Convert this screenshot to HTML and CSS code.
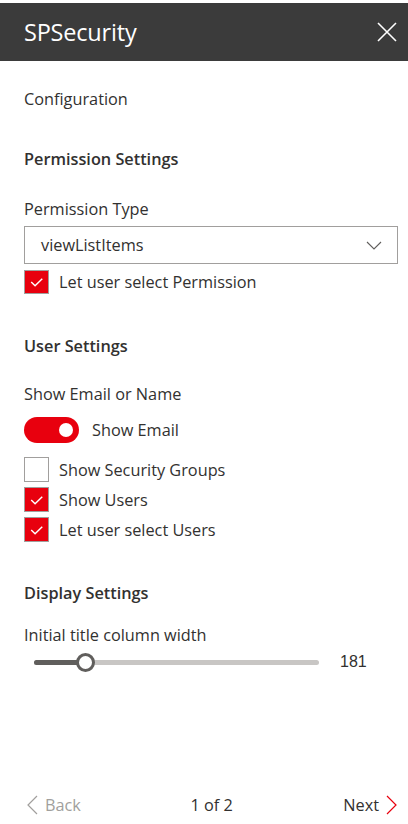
FILE: index.html
```html
<!DOCTYPE html>
<html lang="en">
<head>
<meta charset="utf-8">
<title>SPSecurity</title>
<link rel="stylesheet" href="styles.css">
</head>
<body>
<div class="panel">
  <header class="header">
    <div class="title">SPSecurity</div>
    <button class="close" aria-label="Close">
      <svg width="20" height="20" viewBox="0 0 20 20"><path d="M1 1 L19 19 M19 1 L1 19" stroke="#fff" stroke-width="1.6" fill="none"/></svg>
    </button>
  </header>
  <main class="content">
    <div class="page-title">Configuration</div>

    <div class="section-head sh-perm">Permission Settings</div>
    <div class="field-label fl-perm">Permission Type</div>
    <div class="dropdown">
      <span>viewListItems</span>
      <svg width="16" height="9" viewBox="0 0 16 9"><path d="M1 1 L8 8 L15 1" stroke="#605e5c" stroke-width="1.1" fill="none"/></svg>
    </div>
    <label class="check checked first">
      <span class="box"><svg width="24" height="24" viewBox="0 0 24 24"><polyline points="6.5,12 10.5,16 18,8.5" stroke="#fff" stroke-width="1.5" fill="none"/></svg></span>
      <span class="check-text">Let user select Permission</span>
    </label>

    <div class="section-head sh-user">User Settings</div>
    <div class="field-label fl-user">Show Email or Name</div>
    <div class="toggle-row">
      <span class="toggle"><span class="knob"></span></span>
      <span class="toggle-text">Show Email</span>
    </div>
    <div class="checks">
      <label class="check">
        <span class="box"></span>
        <span class="check-text">Show Security Groups</span>
      </label>
      <label class="check checked">
        <span class="box"><svg width="24" height="24" viewBox="0 0 24 24"><polyline points="6.5,12 10.5,16 18,8.5" stroke="#fff" stroke-width="1.5" fill="none"/></svg></span>
        <span class="check-text">Show Users</span>
      </label>
      <label class="check checked">
        <span class="box"><svg width="24" height="24" viewBox="0 0 24 24"><polyline points="6.5,12 10.5,16 18,8.5" stroke="#fff" stroke-width="1.5" fill="none"/></svg></span>
        <span class="check-text">Let user select Users</span>
      </label>
    </div>

    <div class="section-head sh-disp">Display Settings</div>
    <div class="field-label fl-disp">Initial title column width</div>
    <div class="slider-row">
      <div class="slider">
        <div class="track"></div>
        <div class="fill" style="width: 51px"></div>
        <div class="thumb" style="left: 51px"></div>
      </div>
      <span class="slider-value">181</span>
    </div>
  </main>
  <footer class="footer">
    <span class="nav back">
      <svg width="12" height="20" viewBox="0 0 12 20"><path d="M10 1 L1 10 L10 19" stroke="#a19f9d" stroke-width="1.2" fill="none"/></svg>
      Back
    </span>
    <span class="pager">1 of 2</span>
    <span class="nav next">
      Next
      <svg width="12" height="20" viewBox="0 0 12 20"><path d="M2 1 L11 10 L2 19" stroke="#e8000e" stroke-width="1.2" fill="none"/></svg>
    </span>
  </footer>
</div>
</body>
</html>
```

FILE: styles.css
```css
* { box-sizing: border-box; }

html, body {
  margin: 0;
  padding: 0;
  background: #fff;
}

body {
  font-family: "Open Sans", "Noto Sans", "Liberation Sans", sans-serif;
  color: #323130;
  font-size: 16.3px;
}

.panel {
  min-height: 824px;
  display: flex;
  flex-direction: column;
  padding-top: 3px;
}

.header {
  height: 58px;
  background: #3b3b3b;
  display: flex;
  align-items: center;
  justify-content: space-between;
  padding: 0 11px 0 24px;
}

.title {
  color: #fff;
  font-size: 23.5px;
  font-weight: 400;
  line-height: 30px;
  letter-spacing: -0.2px;
}

.close {
  background: none;
  border: 0;
  padding: 0;
  width: 20px;
  height: 20px;
  display: flex;
}

.content {
  padding: 0 10px 0 24px;
  display: flex;
  flex-direction: column;
}

.page-title {
  margin-top: 27px;
  line-height: 22px;
}

.section-head {
  font-weight: 600;
  line-height: 22px;
}

.sh-perm { margin-top: 38px; }
.sh-user { margin-top: 41px; }
.sh-disp { margin-top: 40px; }

.field-label {
  line-height: 22px;
}

.fl-perm { margin-top: 28px; }
.fl-user { margin-top: 26px; }
.fl-disp { margin-top: 20px; }

.dropdown {
  margin-top: 6px;
  height: 38px;
  border: 1px solid #a19f9d;
  display: flex;
  align-items: center;
  justify-content: space-between;
  padding: 0 15px 0 16px;
}

.check {
  display: flex;
  align-items: center;
  height: 25px;
  gap: 10px;
}

.check.first {
  margin-top: 6px;
  height: 24px;
}

.box {
  width: 25px;
  height: 25px;
  border: 1px solid #a19f9d;
  background: #fff;
  display: flex;
  align-items: center;
  justify-content: center;
  flex: none;
}

.first .box {
  height: 24px;
}

.check.checked .box {
  background: #e8000e;
}

.check-text {
  line-height: 22px;
}

.toggle-row {
  margin-top: 12px;
  display: flex;
  align-items: center;
  gap: 13px;
  height: 26px;
}

.toggle {
  width: 55px;
  height: 26px;
  border-radius: 13px;
  background: #e8000e;
  position: relative;
  flex: none;
}

.knob {
  position: absolute;
  width: 14px;
  height: 14px;
  border-radius: 50%;
  background: #fff;
  right: 6px;
  top: 6px;
}

.toggle-text {
  line-height: 22px;
}

.checks {
  margin-top: 14px;
  display: flex;
  flex-direction: column;
  gap: 5px;
}

.slider-row {
  margin-top: 6px;
  height: 20px;
  display: flex;
  align-items: center;
  padding-left: 10px;
}

.slider {
  position: relative;
  width: 285px;
  height: 20px;
}

.track {
  position: absolute;
  left: 0;
  right: 0;
  top: 8px;
  height: 5px;
  border-radius: 3px;
  background: #c8c6c4;
}

.fill {
  position: absolute;
  left: 0;
  top: 8px;
  height: 5px;
  border-radius: 3px;
  background: #605e5c;
}

.thumb {
  position: absolute;
  top: 1px;
  width: 19px;
  height: 19px;
  margin-left: -9px;
  border-radius: 50%;
  border: 3px solid #605e5c;
  background: #fff;
}

.slider-value {
  margin-left: 21px;
  font-family: "Liberation Sans", Arial, sans-serif;
  font-size: 16px;
  line-height: 20px;
}

.footer {
  margin-top: auto;
  display: flex;
  justify-content: space-between;
  align-items: center;
  height: 22px;
  margin-bottom: 8px;
  padding: 0 11px 0 27px;
}

.nav {
  display: flex;
  align-items: center;
  gap: 6px;
  line-height: 22px;
}

.back {
  color: #a19f9d;
}

.pager {
  line-height: 22px;
  margin-left: -1px;
}
```
